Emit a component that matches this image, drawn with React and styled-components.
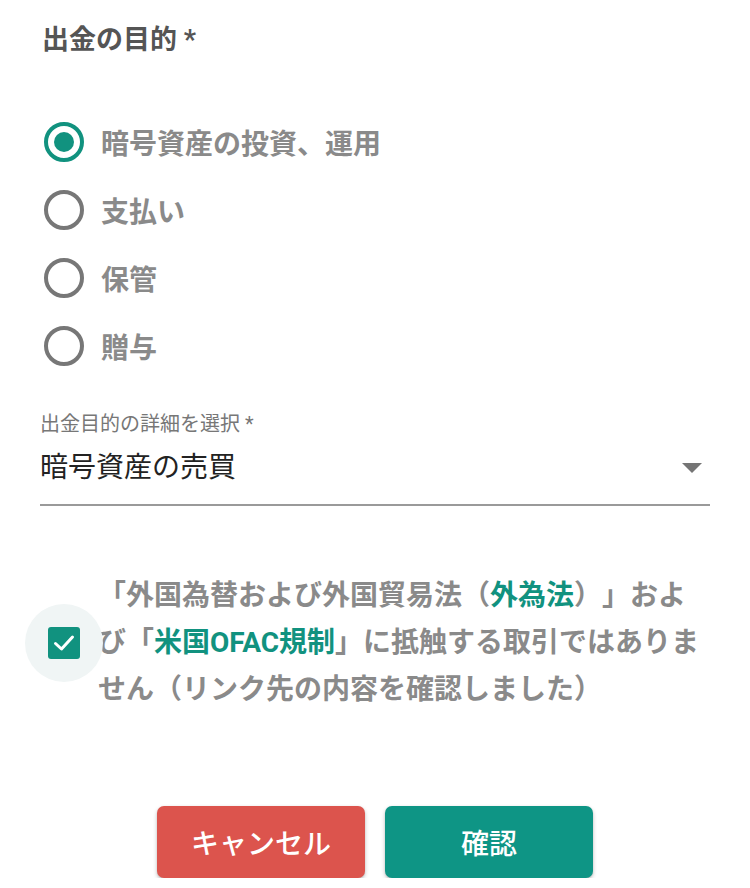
import React, { useState } from "react";
import styled, { createGlobalStyle } from "styled-components";

const TEAL = "#11927f";

const Global = createGlobalStyle`
  html, body { margin: 0; padding: 0; background: #fff; }
  body { font-family: Roboto, "Noto Sans CJK JP", sans-serif; text-spacing-trim: space-all; }
`;

const Page = styled.div`
  width: 750px;
  box-sizing: border-box;
  padding: 21px 40px 0 40px;
  display: flex;
  flex-direction: column;
`;

const Title = styled.div`
  font-size: 27px;
  line-height: 38px;
  font-weight: 700;
  color: #555;
  padding-left: 2px;
`;

const RadioGroup = styled.div`
  margin-top: 49px;
  display: flex;
  flex-direction: column;
`;

const RadioRow = styled.label`
  height: 68px;
  display: flex;
  align-items: center;
  cursor: pointer;
`;

const RadioCircle = styled.span`
  width: 40px;
  height: 40px;
  box-sizing: border-box;
  margin-left: 4px;
  border-radius: 50%;
  border: 4px solid ${(p) => (p.$checked ? TEAL : "#777")};
  display: flex;
  align-items: center;
  justify-content: center;
  &::after {
    content: "";
    width: 20px;
    height: 20px;
    border-radius: 50%;
    background: ${TEAL};
    display: ${(p) => (p.$checked ? "block" : "none")};
  }
`;

const RadioLabel = styled.span`
  margin-left: 17px;
  font-size: 28px;
  font-weight: 700;
  color: #8a8a8a;
`;

const Field = styled.div`
  margin-top: 30px;
  display: flex;
  flex-direction: column;
`;

const FieldLabel = styled.div`
  font-size: 20px;
  line-height: 28px;
  color: #777;
`;

const SelectBox = styled.div`
  margin-top: 10px;
  padding-bottom: 16px;
  border-bottom: 2px solid #9a9a9a;
  display: flex;
  align-items: center;
  justify-content: space-between;
`;

const SelectValue = styled.div`
  font-size: 28px;
  line-height: 40px;
  color: #222;
`;

const Arrow = styled.span`
  width: 0;
  height: 0;
  margin-right: 8px;
  border-left: 10px solid transparent;
  border-right: 10px solid transparent;
  border-top: 10px solid #757575;
`;

const Agree = styled.div`
  margin-top: 66px;
  display: flex;
  align-items: center;
`;

const CheckCell = styled.div`
  width: 48px;
  flex: none;
  display: flex;
  justify-content: center;
  position: relative;
`;

const Ripple = styled.span`
  position: absolute;
  width: 78px;
  height: 78px;
  border-radius: 50%;
  background: #f0f5f5;
  top: 50%;
  left: 50%;
  transform: translate(-50%, -50%);
`;

const CheckBox = styled.span`
  position: relative;
  width: 32px;
  height: 32px;
  border-radius: 3px;
  background: ${TEAL};
  display: flex;
  align-items: center;
  justify-content: center;
`;

const AgreeText = styled.p`
  margin: 0 0 0 10px;
  font-size: 28px;
  line-height: 47px;
  font-weight: 700;
  color: #8a8a8a;
  text-spacing-trim: space-all;
`;

const Link = styled.span`
  color: ${TEAL};
`;

const Buttons = styled.div`
  margin-top: 93px;
  display: flex;
  justify-content: center;
  gap: 20px;
`;

const Button = styled.button`
  width: 208px;
  height: 72px;
  border: none;
  border-radius: 7px;
  background: ${(p) => (p.$variant === "cancel" ? "#dc544d" : "#0e9585")};
  color: #fff;
  font-family: Roboto, "Noto Sans CJK JP", sans-serif;
  font-size: 28px;
  font-weight: 500;
  box-shadow: 0 2px 4px rgba(0, 0, 0, 0.22), 0 1px 2px rgba(0, 0, 0, 0.1);
`;

const options = ["暗号資産の投資、運用", "支払い", "保管", "贈与"];

export default function App() {
  const [selected, setSelected] = useState(0);
  return (
    <Page>
      <Global />
      <Title>出金の目的 *</Title>
      <RadioGroup>
        {options.map((o, i) => (
          <RadioRow key={o} onClick={() => setSelected(i)}>
            <RadioCircle $checked={selected === i} />
            <RadioLabel>{o}</RadioLabel>
          </RadioRow>
        ))}
      </RadioGroup>
      <Field>
        <FieldLabel>出金目的の詳細を選択 *</FieldLabel>
        <SelectBox>
          <SelectValue>暗号資産の売買</SelectValue>
          <Arrow />
        </SelectBox>
      </Field>
      <Agree>
        <CheckCell>
          <Ripple />
          <CheckBox>
            <svg width="22" height="18" viewBox="0 0 22 18">
              <path d="M2.5 9.5 L8.5 15 L19.5 3" fill="none" stroke="#fff" strokeWidth="3" strokeLinecap="round" strokeLinejoin="round" />
            </svg>
          </CheckBox>
        </CheckCell>
        <AgreeText>
          「外国為替および外国貿易法（<Link>外為法</Link>）」および「<Link>米国OFAC規制</Link>」に抵触する取引ではありません（リンク先の内容を確認しました）
        </AgreeText>
      </Agree>
      <Buttons>
        <Button $variant="cancel">キャンセル</Button>
        <Button $variant="confirm">確認</Button>
      </Buttons>
    </Page>
  );
}
